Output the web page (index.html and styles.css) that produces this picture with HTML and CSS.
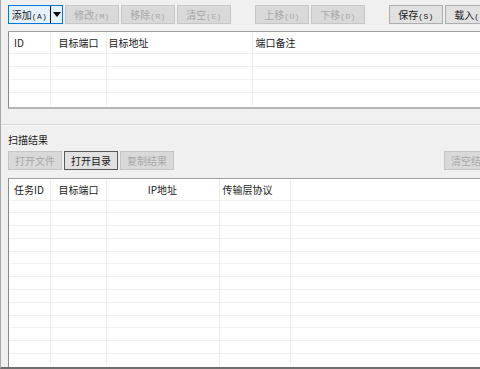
FILE: index.html
```html
<!DOCTYPE html>
<html lang="zh-CN">
  <head>
    <meta charset="utf-8">
    <title>端口扫描</title>
    <link rel="stylesheet" href="styles.css">
  </head>
  <body>
    <div class="window">
      <div class="toolbar">
        <div class="split">
          <span class="split-main">添加<small>(A)</small></span>
          <span class="split-arrow"><i class="tri"></i></span>
        </div>
        <button class="btn" disabled>修改<small>(M)</small></button>
        <button class="btn" disabled>移除<small>(R)</small></button>
        <button class="btn" disabled>清空<small>(E)</small></button>
        <span class="spacer"></span>
        <button class="btn" disabled>上移<small>(U)</small></button>
        <button class="btn" disabled>下移<small>(D)</small></button>
        <span class="spacer"></span>
        <button class="btn">保存<small>(S)</small></button>
        <button class="btn">载入<small>(L)</small></button>
      </div>

      <div class="list list-targets">
        <table>
          <colgroup>
            <col style="width:41px">
            <col style="width:56px">
            <col style="width:146px">
            <col>
          </colgroup>
          <tr><th class="c1">ID</th><th class="c2">目标端口</th><th class="c3">目标地址</th><th class="c4">端口备注</th></tr>
          <tr><td></td><td></td><td></td><td></td></tr>
          <tr><td></td><td></td><td></td><td></td></tr>
          <tr><td></td><td></td><td></td><td></td></tr>
          <tr><td></td><td></td><td></td><td></td></tr>
        </table>
      </div>

      <div class="splitter"></div>

      <div class="group-title">扫描结果</div>

      <div class="toolbar toolbar-results">
        <button class="btn" disabled>打开文件</button>
        <button class="btn btn-default">打开目录</button>
        <button class="btn" disabled>复制结果</button>
        <span class="grow"></span>
        <button class="btn" disabled>清空结果</button>
      </div>

      <div class="list list-results">
        <table>
          <colgroup>
            <col style="width:41px">
            <col style="width:56px">
            <col style="width:113px">
            <col style="width:71px">
            <col>
          </colgroup>
          <tr><th class="c1">任务ID</th><th class="c2">目标端口</th><th class="mid">IP地址</th><th class="c4">传输层协议</th><th></th></tr>
          <tr><td></td><td></td><td></td><td></td><td></td></tr>
          <tr><td></td><td></td><td></td><td></td><td></td></tr>
          <tr><td></td><td></td><td></td><td></td><td></td></tr>
          <tr><td></td><td></td><td></td><td></td><td></td></tr>
          <tr><td></td><td></td><td></td><td></td><td></td></tr>
          <tr><td></td><td></td><td></td><td></td><td></td></tr>
          <tr><td></td><td></td><td></td><td></td><td></td></tr>
          <tr><td></td><td></td><td></td><td></td><td></td></tr>
          <tr><td></td><td></td><td></td><td></td><td></td></tr>
          <tr><td></td><td></td><td></td><td></td><td></td></tr>
          <tr><td></td><td></td><td></td><td></td><td></td></tr>
          <tr><td></td><td></td><td></td><td></td><td></td></tr>
          <tr><td></td><td></td><td></td><td></td><td></td></tr>
        </table>
      </div>
    </div>
  </body>
</html>
```

FILE: styles.css
```css
* {
  margin: 0;
  padding: 0;
  box-sizing: border-box;
}
body {
  background: #f0f0f0;
  font: 10px "Noto Sans CJK SC", "Liberation Sans", sans-serif;
  color: #1a1a1a;
  overflow: hidden;
}
.window {
  width: 480px;
  height: 369px;
  border-left: 1px solid #a8a8a8;
  border-bottom: 2px solid #6e6e6e;
  padding-left: 7px;
  overflow: hidden;
}

/* toolbars */
.toolbar {
  display: flex;
  gap: 2px;
  padding-top: 5px;
  width: 520px;
}
.toolbar-results {
  width: 490px;
  padding-top: 0;
}
.spacer {
  width: 20px;
}
.grow {
  flex: 1;
}
.btn {
  width: 54px;
  height: 19px;
  font: 10px "Noto Sans CJK SC", "Liberation Sans", sans-serif;
  line-height: 17px;
  color: #1a1a1a;
  background: #e1e1e1;
  border: 1px solid #adadad;
  white-space: nowrap;
}
.btn:disabled {
  color: #a8a8a8;
  background: #d9d9d9;
  border-color: #c6c6c6;
}
.btn-default {
  border-color: #5a5a5a;
}
.btn small,
.split small {
  font: 8px "Liberation Mono", monospace;
  letter-spacing: 0.3px;
}

.split {
  display: flex;
  width: 55px;
  height: 19px;
  border: 1px solid #0078d7;
  background: #e5f1fb;
}
.split-main {
  width: 41px;
  text-align: center;
  line-height: 17px;
  white-space: nowrap;
}
.split-arrow {
  flex: 1;
  border-left: 1px solid #1a1a1a;
  display: flex;
  align-items: center;
  justify-content: center;
}
.tri {
  border-top: 5px solid #000;
  border-left: 4px solid transparent;
  border-right: 4px solid transparent;
}

/* list views */
.list {
  width: 500px;
  background: #fff;
  border-top: 1px solid #a0a0a0;
  border-left: 1px solid #8c8c8c;
  overflow: hidden;
}
.list table {
  width: 100%;
  border-collapse: collapse;
  table-layout: fixed;
}
.list th {
  height: 21px;
  font-weight: normal;
  text-align: left;
  color: #1a1a1a;
  white-space: nowrap;
  border-right: 1px solid #eeeeee;
  padding-top: 1px;
}
.list td {
  border-right: 1px solid #f0f0f0;
  border-top: 1px solid #f0f0f0;
}
.list th:last-child,
.list td:last-child {
  border-right: none;
}
.list .c1 { padding-left: 5px; }
.list .c2 { padding-left: 8px; }
.list .c3 { padding-left: 2px; }
.list .c4 { padding-left: 3px; }
.list .mid { text-align: center; }

.list-targets {
  margin-top: 7px;
  height: 78px;
  border-bottom: 2px solid #b4b4b4;
}
.list-targets td {
  height: 13.3px;
}

.list-results {
  margin-top: 8px;
  height: 189px;
}
.list-results td {
  height: 12.8px;
}

.splitter {
  height: 16px;
  margin-left: -7px;
  border-bottom: 1px solid #d6d6d6;
  box-shadow: 0 1px 0 #fbfbfb;
}
.group-title {
  height: 26px;
  padding-top: 7px;
  line-height: 16px;
}
```
